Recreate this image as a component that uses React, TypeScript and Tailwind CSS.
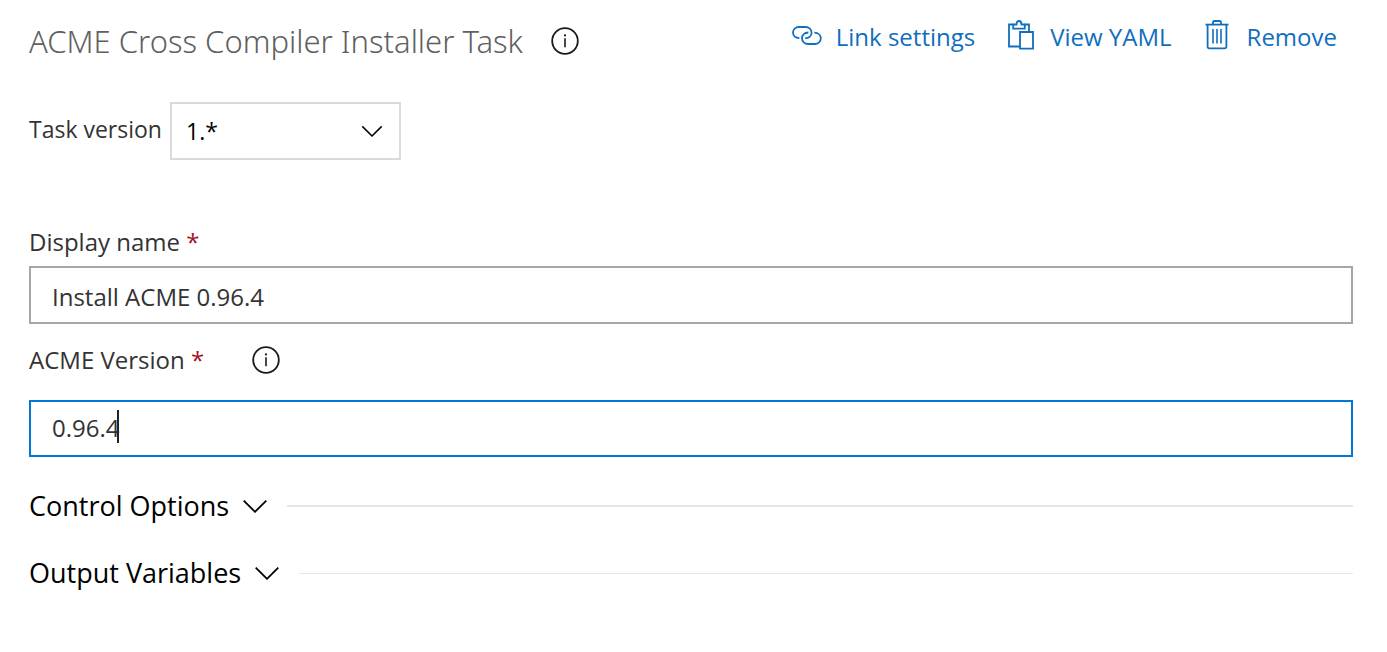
import { useState } from "react";

function InfoIcon() {
  return (
    <svg viewBox="0 0 28 28" className="size-7" fill="none" aria-hidden="true">
      <circle cx="14" cy="14" r="12.8" stroke="currentColor" strokeWidth="1.8" />
      <path d="M14 11.3V20.3" stroke="currentColor" strokeWidth="1.6" />
      <circle cx="14" cy="8.4" r="1.1" fill="currentColor" />
    </svg>
  );
}

function Chevron({ className }: { className: string }) {
  return (
    <svg viewBox="0 0 24 14" className={className} fill="none" stroke="currentColor" strokeWidth="1.8" aria-hidden="true">
      <path d="M0.7 1.6L12 12.8L23.3 1.6" />
    </svg>
  );
}

function LinkIcon() {
  return (
    <svg viewBox="0 0 30 19" className="mb-1 h-[19px] w-[30px]" fill="none" stroke="currentColor" strokeWidth="1.8" aria-hidden="true">
      <path d="M7.4 12.2C3.6 12 1 9.7 1 6.6C1 3.4 3.6 1 7 1H13.4C16.9 1 19.6 3.4 19.6 6.6C19.6 9.9 17 12.2 13.2 12.4" />
      <path d="M22.4 6.7C26.2 6.9 28.8 9.2 28.8 12.3C28.8 15.6 26.2 18 22.8 18H16.2C12.6 18 10 15.6 10 12.3C10 9.1 12.6 6.7 16.4 6.5" />
    </svg>
  );
}

function ClipboardIcon() {
  return (
    <svg viewBox="0 0 26 30" className="mb-1 h-[30px] w-[26px]" fill="none" stroke="currentColor" strokeWidth="1.8" aria-hidden="true">
      <path d="M11.5 26.5H1V4.5H5.2M16.8 4.5H21V11" />
      <path d="M5.2 4.5H8.5C8.5 2.2 9.5 1 11 1S13.5 2.2 13.5 4.5H16.8V8.6H5.2Z" />
      <path d="M12 12H25V28.6H12Z" />
    </svg>
  );
}

function TrashIcon() {
  return (
    <svg viewBox="0 0 24 30" className="mb-1 h-[30px] w-6" fill="none" stroke="currentColor" strokeWidth="1.8" aria-hidden="true">
      <path d="M0.5 4.6H23.5" />
      <path d="M8 4.6V2.4Q8 1 9.4 1H14.6Q16 1 16 2.4V4.6" />
      <path d="M2.6 4.6V26.6Q2.6 28.4 4.4 28.4H19.6Q21.4 28.4 21.4 26.6V4.6" />
      <path d="M8 9V23.5M12 9V23.5M16 9V23.5" strokeWidth="1.6" />
    </svg>
  );
}

function Section({ title, lineClass }: { title: string; lineClass: string }) {
  return (
    <section className="flex h-10 items-center">
      <button type="button" aria-expanded="false" className="flex items-center gap-3.5 text-[27px] leading-10 text-black">
        {title}
        <Chevron className="h-3.5 w-6" />
      </button>
      <div className={lineClass} />
    </section>
  );
}

export default function App() {
  const [version, setVersion] = useState("1.*");
  const [name, setName] = useState("Install ACME 0.96.4");
  const [acme, setAcme] = useState("0.96.4");

  return (
    <main className="min-h-screen bg-white pt-4 pr-[34px] pb-10 pl-[29px] font-['Open_Sans','Noto_Sans',sans-serif] text-2xl font-normal text-[#333333]">
      <header className="flex items-start justify-between">
        <div className="flex h-[50px] items-center gap-7">
          <h1 className="font-['Noto_Sans','Open_Sans',sans-serif] text-[31px] leading-12 font-light text-[#606060]">
            ACME Cross Compiler Installer Task
          </h1>
          <button type="button" aria-label="Task information" className="text-[#1a1a1a]">
            <InfoIcon />
          </button>
        </div>
        <nav className="flex items-center gap-[33px] pt-px pr-4 leading-10 text-[#106ebe]" aria-label="Task actions">
          <button type="button" className="flex items-center gap-3.5">
            <LinkIcon />
            Link settings
          </button>
          <button type="button" className="flex items-center gap-4">
            <ClipboardIcon />
            View YAML
          </button>
          <button type="button" className="flex items-center gap-[18px]">
            <TrashIcon />
            Remove
          </button>
        </nav>
      </header>

      <div className="mt-9 flex items-center gap-2">
        <label htmlFor="task-version" className="pb-1 text-[23px]">
          Task version
        </label>
        <div className="relative">
          <select
            id="task-version"
            value={version}
            onChange={(e) => setVersion(e.target.value)}
            className="h-[58px] w-[231px] appearance-none border-2 border-[#dadada] bg-white px-3.5 text-[23px] text-black outline-none"
          >
            <option>1.*</option>
          </select>
          <Chevron className="pointer-events-none absolute top-[23px] right-[18px] h-3 w-[22px] text-black" />
        </div>
      </div>

      <div className="mt-[62px]">
        <label htmlFor="display-name" className="block leading-10">
          Display name <span className="text-[#a80f22]">*</span>
        </label>
        <input
          id="display-name"
          value={name}
          onChange={(e) => setName(e.target.value)}
          className="mt-1 block h-[58px] w-full border-2 border-[#a6a6a6] bg-white px-[21px] pt-0.5 outline-none"
        />
      </div>

      <div className="mt-4">
        <div className="flex h-10 items-center gap-12">
          <label htmlFor="acme-version">
            ACME Version <span className="text-[#a80f22]">*</span>
          </label>
          <button type="button" aria-label="Version information" className="text-[#1a1a1a]">
            <InfoIcon />
          </button>
        </div>
        <div className="relative mt-5">
          <input
            id="acme-version"
            value={acme}
            onChange={(e) => setAcme(e.target.value)}
            className="block h-[57px] w-full border-2 border-[#0078d4] bg-white px-[21px] pb-0.5 caret-transparent outline-none"
          />
          <span className="absolute top-[10px] left-[88px] h-[33px] w-0.5 bg-[#222222]" />
        </div>
      </div>

      <div className="mt-[29px] flex flex-col gap-[27px]">
        <Section title="Control Options" lineClass="ml-5 h-0.5 flex-1 bg-[#e6e6e6]" />
        <Section title="Output Variables" lineClass="ml-5 h-px flex-1 bg-[#e6e6e6]" />
      </div>
    </main>
  );
}
